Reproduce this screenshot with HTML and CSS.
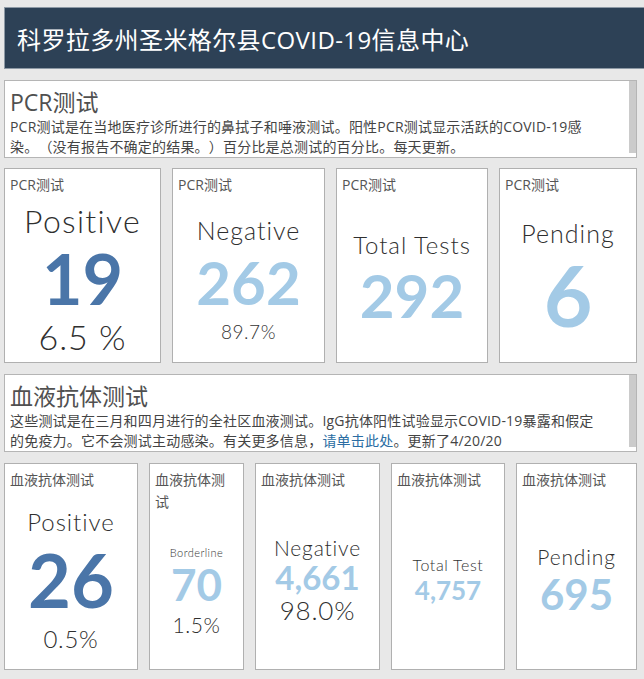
FILE: index.html
```html
<!DOCTYPE html>
<html lang="zh-CN">
  <head>
    <meta charset="UTF-8" />
    <meta name="viewport" content="width=device-width, initial-scale=1.0" />
    <title>科罗拉多州圣米格尔县COVID-19信息中心</title>
    <link rel="stylesheet" href="styles.css">
  </head>
  <body>
    <header class="top-bar">
      <h1>科罗拉多州圣米格尔县COVID-19信息中心</h1>
    </header>

    <section class="intro">
      <div class="intro-body">
        <h2>PCR测试</h2>
        <p>PCR测试是在当地医疗诊所进行的鼻拭子和唾液测试。阳性PCR测试显示活跃的COVID-19感染。（没有报告不确定的结果。）百分比是总测试的百分比。每天更新。</p>
      </div>
      <div class="intro-scroll"></div>
    </section>

    <div class="stat-row pcr-row">
      <div class="stat-card pcr-positive">
        <div class="stat-label">PCR测试</div>
        <div class="stat-body">
          <div class="stat-name">Positive</div>
          <div class="stat-value dark">19</div>
          <div class="stat-sub">6.5 %</div>
        </div>
      </div>
      <div class="stat-card pcr-negative">
        <div class="stat-label">PCR测试</div>
        <div class="stat-body">
          <div class="stat-name">Negative</div>
          <div class="stat-value">262</div>
          <div class="stat-sub">89.7%</div>
        </div>
      </div>
      <div class="stat-card pcr-total">
        <div class="stat-label">PCR测试</div>
        <div class="stat-body">
          <div class="stat-name">Total Tests</div>
          <div class="stat-value">292</div>
        </div>
      </div>
      <div class="stat-card pcr-pending">
        <div class="stat-label">PCR测试</div>
        <div class="stat-body">
          <div class="stat-name">Pending</div>
          <div class="stat-value">6</div>
        </div>
      </div>
    </div>

    <section class="intro">
      <div class="intro-body">
        <h2>血液抗体测试</h2>
        <p>这些测试是在三月和四月进行的全社区血液测试。IgG抗体阳性试验显示COVID-19暴露和假定的免疫力。它不会测试主动感染。有关更多信息，<a href="#">请单击此处</a>。更新了4/20/20</p>
      </div>
      <div class="intro-scroll"></div>
    </section>

    <div class="stat-row blood-row">
      <div class="stat-card blood-positive">
        <div class="stat-label">血液抗体测试</div>
        <div class="stat-body">
          <div class="stat-name">Positive</div>
          <div class="stat-value dark">26</div>
          <div class="stat-sub">0.5%</div>
        </div>
      </div>
      <div class="stat-card blood-borderline">
        <div class="stat-label">血液抗体测试</div>
        <div class="stat-body">
          <div class="stat-name">Borderline</div>
          <div class="stat-value">70</div>
          <div class="stat-sub">1.5%</div>
        </div>
      </div>
      <div class="stat-card blood-negative">
        <div class="stat-label">血液抗体测试</div>
        <div class="stat-body">
          <div class="stat-name">Negative</div>
          <div class="stat-value">4,661</div>
          <div class="stat-sub">98.0%</div>
        </div>
      </div>
      <div class="stat-card blood-total">
        <div class="stat-label">血液抗体测试</div>
        <div class="stat-body">
          <div class="stat-name">Total Test</div>
          <div class="stat-value">4,757</div>
        </div>
      </div>
      <div class="stat-card blood-pending">
        <div class="stat-label">血液抗体测试</div>
        <div class="stat-body">
          <div class="stat-name">Pending</div>
          <div class="stat-value">695</div>
        </div>
      </div>
    </div>
  </body>
</html>
```

FILE: styles.css
```css
* {
  margin: 0;
  padding: 0;
  box-sizing: border-box;
}
body {
  background: #e8e8e8;
  padding: 7px 0 0 4px;
  font-family: "Open Sans", "Noto Sans CJK SC", sans-serif;
  text-spacing-trim: space-all;
  overflow: hidden;
}
.top-bar {
  height: 62px;
  background: #2d4156;
  border: 1px solid #8d99a5;
  border-right: none;
  display: flex;
  align-items: center;
  padding-left: 12px;
}
.top-bar h1 {
  color: #fff;
  font-size: 24px;
  font-weight: 400;
  letter-spacing: 0.4px;
}

/* section intro panels with their scroll track */
.intro {
  width: 633px;
  height: 78px;
  margin-top: 11px;
  background: #fff;
  border: 1px solid #b5b5b5;
  display: flex;
  overflow: hidden;
}
.intro-body {
  flex: 1;
  padding: 6px 25px 0 5px;
  color: #444;
}
.intro-body h2 {
  font-size: 23px;
  font-weight: 400;
  line-height: 30px;
  color: #505050;
}
.intro-body p {
  font-size: 14px;
  line-height: 20px;
  letter-spacing: 0.2px;
}
.intro-body a {
  color: #2a6da3;
  text-decoration: none;
}
.intro-scroll {
  width: 7px;
  margin-bottom: 4px;
  background: #cbcbcb;
}

/* stat cards */
.stat-row {
  display: grid;
  width: 633px;
  column-gap: 11px;
  margin-top: 10px;
}
.pcr-row {
  grid-template-columns: 157px 153px 152px 138px;
  height: 195px;
}
.blood-row {
  grid-template-columns: 134px 95px 125px 114px 121px;
  height: 207px;
  margin-top: 11px;
}
.stat-card {
  background: #fff;
  border: 1px solid #b0b0b0;
  display: flex;
  flex-direction: column;
}
.stat-label {
  padding: 5px 5px 0 5px;
  font-size: 14px;
  line-height: 22px;
  color: #555;
}
.stat-body {
  flex: 1;
  display: flex;
  flex-direction: column;
  align-items: center;
  justify-content: center;
  text-align: center;
  font-family: Lato, "Open Sans", sans-serif;
  line-height: 1;
  white-space: nowrap;
}
.stat-name {
  color: #2f2f2f;
  font-weight: 300;
  letter-spacing: 0.04em;
}
.stat-value {
  font-weight: 700;
  color: #a3cae6;
}
.stat-value.dark {
  color: #4a75a8;
}
.stat-sub {
  color: #2f2f2f;
  font-weight: 300;
  letter-spacing: 0.03em;
}

.pcr-positive .stat-name { font-size: 32px; }
.pcr-positive .stat-value { font-size: 70px; margin-top: 6px; }
.pcr-positive .stat-sub { font-size: 34px; margin-top: 7px; }

.pcr-negative .stat-name { font-size: 25px; }
.pcr-negative .stat-value { font-size: 60px; margin-top: 9px; }
.pcr-negative .stat-sub { font-size: 19px; margin-top: 10px; color: #333; }

.pcr-total .stat-name { font-size: 24px; }
.pcr-total .stat-value { font-size: 60px; margin-top: 8px; }

.pcr-pending .stat-name { font-size: 25px; }
.pcr-pending .stat-value { font-size: 84px; margin-top: 7px; }

.blood-positive .stat-name { font-size: 24px; }
.blood-positive .stat-value { font-size: 74px; margin-top: 9px; }
.blood-positive .stat-sub { font-size: 24px; margin-top: 10px; }

.blood-borderline .stat-name { font-size: 11px; color: #333; }
.blood-borderline .stat-value { font-size: 44px; margin-top: 4px; }
.blood-borderline .stat-sub { font-size: 21px; margin-top: 8px; }

.blood-negative .stat-name { font-size: 21px; }
.blood-negative .stat-value { font-size: 33px; margin-top: 3px; }
.blood-negative .stat-sub { font-size: 26px; margin-top: 3px; }

.blood-total .stat-name { font-size: 16px; color: #333; }
.blood-total .stat-value { font-size: 26px; margin-top: 4px; }

.blood-pending .stat-name { font-size: 21px; }
.blood-pending .stat-value { font-size: 42px; margin-top: 6px; }
```
